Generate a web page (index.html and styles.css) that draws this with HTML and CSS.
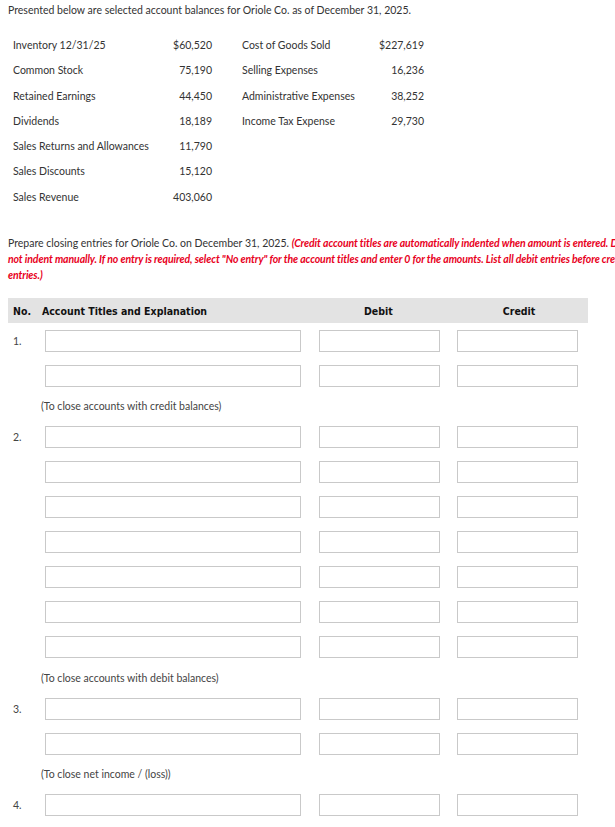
FILE: index.html
```html
<!DOCTYPE html>
<html>
<head>
<meta charset="utf-8">
<link rel="stylesheet" href="styles.css">
</head>
<body>
<div class="page">
  <p class="intro">Presented below are selected account balances for Oriole Co. as of December 31, 2025.</p>
  <div class="balances">
    <div class="col">
      <div class="brow"><span class="lbl">Inventory 12/31/25</span><span class="amt">$60,520</span></div>
      <div class="brow"><span class="lbl">Common Stock</span><span class="amt">75,190</span></div>
      <div class="brow"><span class="lbl">Retained Earnings</span><span class="amt">44,450</span></div>
      <div class="brow"><span class="lbl">Dividends</span><span class="amt">18,189</span></div>
      <div class="brow"><span class="lbl">Sales Returns and Allowances</span><span class="amt">11,790</span></div>
      <div class="brow"><span class="lbl">Sales Discounts</span><span class="amt">15,120</span></div>
      <div class="brow"><span class="lbl">Sales Revenue</span><span class="amt">403,060</span></div>
    </div>
    <div class="col col2">
      <div class="brow"><span class="lbl">Cost of Goods Sold</span><span class="amt">$227,619</span></div>
      <div class="brow"><span class="lbl">Selling Expenses</span><span class="amt">16,236</span></div>
      <div class="brow"><span class="lbl">Administrative Expenses</span><span class="amt">38,252</span></div>
      <div class="brow"><span class="lbl">Income Tax Expense</span><span class="amt">29,730</span></div>
    </div>
  </div>
  <p class="instr">Prepare closing entries for Oriole Co. on December 31, 2025. <em class="red">(Credit account titles are automatically indented when amount is entered. Do not indent manually. If no entry is required, select "No entry" for the account titles and enter 0 for the amounts. List all debit entries before credit entries.)</em></p>

  <div class="journal">
    <div class="head">
      <span class="h-no">No.</span>
      <span class="h-acc">Account Titles and Explanation</span>
      <span class="h-dr">Debit</span>
      <span class="h-cr">Credit</span>
    </div>

    <div class="row"><span class="no">1.</span><span class="in acc"></span><span class="in dr"></span><span class="in cr"></span></div>
    <div class="row"><span class="no"></span><span class="in acc"></span><span class="in dr"></span><span class="in cr"></span></div>
    <div class="expl">(To close accounts with credit balances)</div>

    <div class="row"><span class="no">2.</span><span class="in acc"></span><span class="in dr"></span><span class="in cr"></span></div>
    <div class="row"><span class="no"></span><span class="in acc"></span><span class="in dr"></span><span class="in cr"></span></div>
    <div class="row"><span class="no"></span><span class="in acc"></span><span class="in dr"></span><span class="in cr"></span></div>
    <div class="row"><span class="no"></span><span class="in acc"></span><span class="in dr"></span><span class="in cr"></span></div>
    <div class="row"><span class="no"></span><span class="in acc"></span><span class="in dr"></span><span class="in cr"></span></div>
    <div class="row"><span class="no"></span><span class="in acc"></span><span class="in dr"></span><span class="in cr"></span></div>
    <div class="row"><span class="no"></span><span class="in acc"></span><span class="in dr"></span><span class="in cr"></span></div>
    <div class="expl">(To close accounts with debit balances)</div>

    <div class="row"><span class="no">3.</span><span class="in acc"></span><span class="in dr"></span><span class="in cr"></span></div>
    <div class="row"><span class="no"></span><span class="in acc"></span><span class="in dr"></span><span class="in cr"></span></div>
    <div class="expl">(To close net income / (loss))</div>

    <div class="row"><span class="no">4.</span><span class="in acc"></span><span class="in dr"></span><span class="in cr"></span></div>
    <div class="row"><span class="no"></span><span class="in acc"></span><span class="in dr"></span><span class="in cr"></span></div>
  </div>
</div>
</body>
</html>
```
FILE: styles.css
```css
html, body {
  margin: 0;
  padding: 0;
  overflow: hidden;
  background: #fff;
}
.page {
  width: 640px;
  padding: 2px 0 0 8px;
  font-family: Lato, "Open Sans", sans-serif;
  font-size: 10.5px;
  color: #333;
}
.intro {
  margin: 0;
  line-height: 16px;
}
.balances {
  display: flex;
  margin-top: 19px;
  padding-left: 5px;
}
.col {
  width: 199px;
}
.col2 {
  width: 182px;
  margin-left: 30px;
}
.brow {
  display: flex;
  justify-content: space-between;
  height: 25.3px;
  line-height: 16px;
}
.instr {
  margin: 21px 0 0 0;
  line-height: 16px;
  width: 625px;
}
.red {
  color: #e8001c;
  font-weight: bold;
  font-style: italic;
  letter-spacing: -0.1px;
}
.journal {
  margin-top: 15px;
  width: 580px;
}
.head {
  display: flex;
  align-items: center;
  height: 25px;
  background: #e3e3e3;
  font-family: "DejaVu Sans Condensed", "DejaVu Sans", sans-serif;
  font-weight: bold;
  font-size: 10.5px;
  color: #111;
}
.h-no { width: 29px; padding-left: 5px; }
.h-acc { width: 263px; }
.h-dr { width: 140px; text-align: center; padding-left: 4px; }
.h-cr { width: 138px; text-align: center; padding-left: 2px; }
.row {
  display: flex;
  align-items: center;
  height: 35px;
}
.no {
  width: 37px;
  padding-left: 5px;
  box-sizing: border-box;
  color: #444;
}
.in {
  display: block;
  height: 22px;
  box-sizing: border-box;
  border: 1px solid #c9c9c9;
  background: #fff;
}
.acc { width: 256px; }
.dr { width: 121px; margin-left: 18px; }
.cr { width: 121px; margin-left: 17px; }
.expl {
  height: 26.5px;
  line-height: 26.5px;
  padding-left: 33px;
  color: #444;
}
```
